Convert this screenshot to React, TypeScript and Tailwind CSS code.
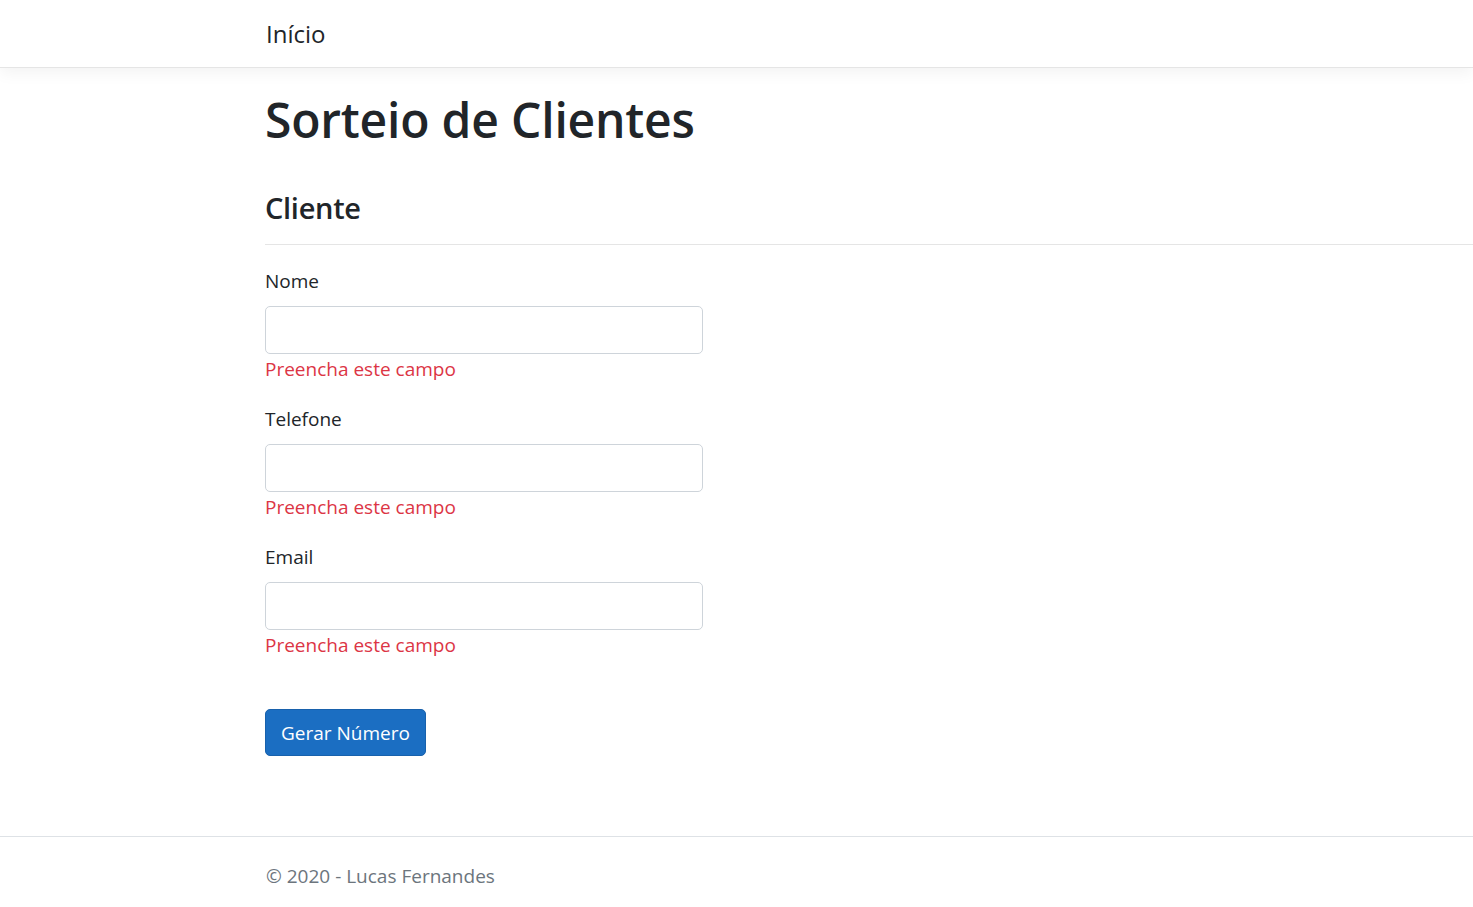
import React from "react";

const fields = ["Nome", "Telefone", "Email"];

export default function App() {
  return (
    <div className="min-h-screen flex flex-col bg-white text-[#212529] font-['Open_Sans',sans-serif]">
      <header className="h-[68px] border-b border-[#e5e5e5] shadow-[0_5px_15px_rgba(0,0,0,0.05)] flex items-center pl-[266px]">
        <span className="text-[24px] leading-none">Início</span>
      </header>

      <main className="flex-1 pl-[265px] pt-[22px]">
        <h1 className="text-[48px] font-semibold leading-[60px] tracking-[-0.2px]">Sorteio de Clientes</h1>
        <h4 className="mt-[40px] text-[29px] font-semibold leading-[36px] tracking-[-0.3px]">Cliente</h4>
        <hr className="mt-[18px] border-t border-[rgba(0,0,0,0.1)]" />

        <form className="mt-[21px] w-[438px]">
          {fields.map((f) => (
            <div key={f} className="mb-[20px]">
              <label className="block text-[19px] leading-[30px] mb-[10px]">{f}</label>
              <input
                type="text"
                className="block w-full h-[48px] px-[15px] rounded-[5px] border border-[#ced4da] text-[19px] outline-none"
              />
              <span className="block text-[19px] leading-[30px] text-[#dc3545]">Preencha este campo</span>
            </div>
          ))}
          <button
            type="button"
            className="mt-[29px] h-[47px] px-[15px] rounded-[5px] bg-[#1b6ec2] border border-[#1861ac] text-white text-[19px] leading-[30px]"
          >
            Gerar Número
          </button>
        </form>
      </main>

      <footer className="h-[71px] border-t border-[#dee2e6] pl-[266px] flex items-center pt-[8px]">
        <span className="text-[19px] leading-[30px] text-[#6c757d]">© 2020 - Lucas Fernandes</span>
      </footer>
    </div>
  );
}
